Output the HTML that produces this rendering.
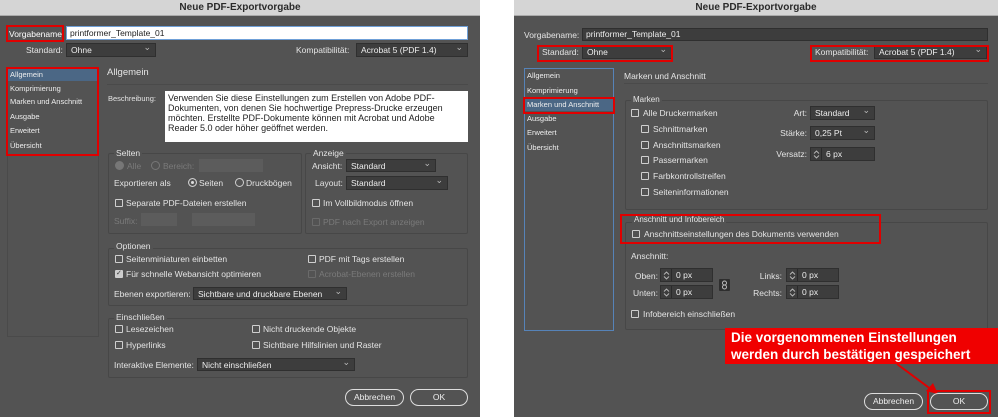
<!DOCTYPE html>
<html><head><meta charset="utf-8"><style>
*{margin:0;padding:0;box-sizing:border-box}
body{width:998px;height:417px;background:#fff;position:relative;overflow:hidden;font-family:"Liberation Sans",sans-serif;font-size:8.5px;color:#e4e4e4}
.d{position:absolute;top:0;height:417px;background:#535353;overflow:hidden}
.tb{position:absolute;left:0;right:0;top:0;height:16px;background:#d5d5d5;color:#2a2a2a;font-weight:bold;font-size:10px;text-align:center;line-height:16px;border-bottom:1px solid #aaa}
.a{position:absolute;white-space:nowrap;line-height:10px}
.s{position:absolute;background:#3d3d3d;border:1px solid #2f2f2f;color:#eee;padding-left:4px;line-height:12px;white-space:nowrap}
.s:after{content:"⌄";position:absolute;right:4px;top:-3px;font-size:9px;color:#bbb}
.n:after{content:""}
.g{position:absolute;border:1px solid #474747;border-radius:2px}
.cb{position:absolute;width:8px;height:8px;border:1px solid #cfcfcf;border-radius:1px}
.gr{color:#7a7a7a}
.gcb{border-color:#6a6a6a}
.rb{position:absolute;width:9px;height:9px;border:1px solid #cfcfcf;border-radius:50%}
.red{position:absolute;border:2px solid #e00000}
.btn{position:absolute;border:1.5px solid #ddd;border-radius:9px;text-align:center;line-height:14px;color:#eee}
.sp{position:absolute;background:#3d3d3d;border:1px solid #2f2f2f;color:#eee;line-height:12px;padding-left:15px}
.sp:before{content:"";position:absolute;left:10px;top:0;bottom:0;border-left:1px solid #2a2a2a}
.sp svg{position:absolute;left:2px;top:2px}
.side div{position:absolute;left:2px;font-size:7.5px;color:#eee}
</style></head><body>

<!-- LEFT DIALOG -->
<div class="d" style="left:0;width:480px">
<div class="tb">Neue PDF-Exportvorgabe</div>
<div class="a" style="left:9px;top:29px;color:#fff">Vorgabename:</div>
<div class="red" style="left:6px;top:25px;width:58px;height:17px"></div>
<div style="position:absolute;left:66px;top:26px;width:402px;height:14px;background:#fff;border:1px solid #6fa0d8;color:#222;padding-left:3px;line-height:12px">printformer_Template_01</div>
<div class="a" style="left:26px;top:45px">Standard:</div>
<div class="s" style="left:66px;top:43px;width:90px;height:14px">Ohne</div>
<div class="a" style="left:296px;top:45px">Kompatibilität:</div>
<div class="s" style="left:356px;top:43px;width:112px;height:14px">Acrobat 5 (PDF 1.4)</div>

<div style="position:absolute;left:7px;top:67px;width:92px;height:270px;border:1px solid #4a4a4a"></div>
<div style="position:absolute;left:8px;top:68px;width:90px;height:13px;background:#4b6785"></div>
<div class="side">
<div style="left:10px;top:70px">Allgemein</div>
<div style="left:10px;top:84px">Komprimierung</div>
<div style="left:10px;top:97px">Marken und Anschnitt</div>
<div style="left:10px;top:112px">Ausgabe</div>
<div style="left:10px;top:126px">Erweitert</div>
<div style="left:10px;top:141px">Übersicht</div>
</div>
<div class="red" style="left:6px;top:67px;width:93px;height:89px"></div>

<div class="a" style="left:107px;top:68px;font-size:9.5px">Allgemein</div>
<div style="position:absolute;left:107px;top:84px;width:361px;border-top:1px solid #4a4a4a"></div>
<div class="a" style="left:108px;top:94px;font-size:7.5px">Beschreibung:</div>
<div style="position:absolute;left:165px;top:91px;width:303px;height:51px;background:#fff;color:#222;padding:2px 10px 0 3px;line-height:10px;font-size:9px">Verwenden Sie diese Einstellungen zum Erstellen von Adobe PDF-Dokumenten, von denen Sie hochwertige Prepress-Drucke erzeugen möchten. Erstellte PDF-Dokumente können mit Acrobat und Adobe Reader 5.0 oder höher geöffnet werden.</div>

<div class="g" style="left:108px;top:153px;width:194px;height:81px"></div>
<div class="a" style="left:114px;top:148px;background:#535353;padding:0 2px">Selten</div>
<div class="rb" style="left:115px;top:161px;border-color:#777;background:#777"></div>
<div class="a gr" style="left:127px;top:161px">Alle</div>
<div class="rb" style="left:151px;top:161px;border-color:#777"></div>
<div class="a gr" style="left:163px;top:161px">Bereich:</div>
<div class="s n" style="left:199px;top:159px;width:64px;height:13px;background:#5c5c5c;border-color:#5c5c5c"></div>
<div class="a" style="left:114px;top:178px">Exportieren als</div>
<div class="rb" style="left:188px;top:178px;background:#ddd;box-shadow:inset 0 0 0 2px #535353"></div>
<div class="a" style="left:199px;top:178px">Seiten</div>
<div class="rb" style="left:235px;top:178px"></div>
<div class="a" style="left:246px;top:178px">Druckbögen</div>
<div class="cb" style="left:115px;top:199px"></div>
<div class="a" style="left:126px;top:198px">Separate PDF-Dateien erstellen</div>
<div class="a gr" style="left:114px;top:216px">Suffix:</div>
<div style="position:absolute;left:141px;top:213px;width:36px;height:13px;background:#5c5c5c"></div>
<div style="position:absolute;left:192px;top:213px;width:63px;height:13px;background:#5c5c5c"></div>

<div class="g" style="left:305px;top:153px;width:163px;height:81px"></div>
<div class="a" style="left:311px;top:148px;background:#535353;padding:0 2px">Anzeige</div>
<div class="a" style="left:312px;top:161px">Ansicht:</div>
<div class="s" style="left:346px;top:159px;width:90px;height:13px">Standard</div>
<div class="a" style="left:315px;top:178px">Layout:</div>
<div class="s" style="left:346px;top:176px;width:102px;height:14px">Standard</div>
<div class="cb" style="left:312px;top:199px"></div>
<div class="a" style="left:323px;top:198px">Im Vollbildmodus öffnen</div>
<div class="cb gcb" style="left:312px;top:218px"></div>
<div class="a gr" style="left:323px;top:217px">PDF nach Export anzeigen</div>

<div class="g" style="left:108px;top:248px;width:360px;height:58px"></div>
<div class="a" style="left:114px;top:241px;background:#535353;padding:0 2px">Optionen</div>
<div class="cb" style="left:115px;top:255px"></div>
<div class="a" style="left:126px;top:254px">Seitenminiaturen einbetten</div>
<div class="cb" style="left:308px;top:255px"></div>
<div class="a" style="left:319px;top:254px">PDF mit Tags erstellen</div>
<div class="cb" style="left:115px;top:270px;background:#ccc"></div>
<div class="a" style="left:116px;top:269px;color:#333;font-size:7px">✓</div>
<div class="a" style="left:126px;top:269px">Für schnelle Webansicht optimieren</div>
<div class="cb gcb" style="left:308px;top:270px"></div>
<div class="a gr" style="left:319px;top:269px">Acrobat-Ebenen erstellen</div>
<div class="a" style="left:114px;top:289px">Ebenen exportieren:</div>
<div class="s" style="left:193px;top:287px;width:154px;height:13px">Sichtbare und druckbare Ebenen</div>

<div class="g" style="left:108px;top:318px;width:360px;height:60px"></div>
<div class="a" style="left:114px;top:312px;background:#535353;padding:0 2px">Einschließen</div>
<div class="cb" style="left:115px;top:325px"></div>
<div class="a" style="left:126px;top:324px">Lesezeichen</div>
<div class="cb" style="left:252px;top:325px"></div>
<div class="a" style="left:263px;top:324px">Nicht druckende Objekte</div>
<div class="cb" style="left:115px;top:341px"></div>
<div class="a" style="left:126px;top:340px">Hyperlinks</div>
<div class="cb" style="left:252px;top:341px"></div>
<div class="a" style="left:263px;top:340px">Sichtbare Hilfslinien und Raster</div>
<div class="a" style="left:114px;top:360px">Interaktive Elemente:</div>
<div class="s" style="left:197px;top:358px;width:158px;height:13px">Nicht einschließen</div>

<div class="btn" style="left:345px;top:389px;width:59px;height:17px">Abbrechen</div>
<div class="btn" style="left:410px;top:389px;width:58px;height:17px">OK</div>
</div>

<!-- RIGHT DIALOG -->
<div class="d" style="left:514px;width:484px">
<div class="tb">Neue PDF-Exportvorgabe</div>
<div class="a" style="left:10px;top:30px">Vorgabename:</div>
<div style="position:absolute;left:68px;top:28px;width:406px;height:13px;background:#3d3d3d;border:1px solid #2f2f2f;padding-left:3px;line-height:11px;color:#eee">printformer_Template_01</div>
<div class="a" style="left:28px;top:47px">Standard:</div>
<div class="s" style="left:68px;top:45px;width:90px;height:14px">Ohne</div>
<div class="red" style="left:23px;top:45px;width:136px;height:17px"></div>
<div class="a" style="left:301px;top:47px">Kompatibilität:</div>
<div class="s" style="left:360px;top:45px;width:113px;height:14px">Acrobat 5 (PDF 1.4)</div>
<div class="red" style="left:296px;top:45px;width:179px;height:17px"></div>

<div style="position:absolute;left:10px;top:68px;width:90px;height:263px;border:1px solid #5683b8"></div>
<div style="position:absolute;left:11px;top:98px;width:88px;height:13px;background:#4b6785"></div>
<div class="side">
<div style="left:13px;top:71px">Allgemein</div>
<div style="left:13px;top:86px">Komprimierung</div>
<div style="left:13px;top:100px">Marken und Anschnitt</div>
<div style="left:13px;top:114px">Ausgabe</div>
<div style="left:13px;top:128px">Erweitert</div>
<div style="left:13px;top:143px">Übersicht</div>
</div>
<div class="red" style="left:9px;top:97px;width:92px;height:17px"></div>

<div class="a" style="left:110px;top:71px">Marken und Anschnitt</div>
<div style="position:absolute;left:110px;top:83px;width:364px;border-top:1px solid #4a4a4a"></div>

<div class="g" style="left:111px;top:100px;width:363px;height:110px"></div>
<div class="a" style="left:117px;top:95px;background:#535353;padding:0 2px;font-size:8px">Marken</div>
<div class="cb" style="left:117px;top:109px"></div>
<div class="a" style="left:129px;top:108px">Alle Druckermarken</div>
<div class="cb" style="left:127px;top:125px"></div><div class="a" style="left:139px;top:124px">Schnittmarken</div>
<div class="cb" style="left:127px;top:141px"></div><div class="a" style="left:139px;top:140px">Anschnittsmarken</div>
<div class="cb" style="left:127px;top:156px"></div><div class="a" style="left:139px;top:155px">Passermarken</div>
<div class="cb" style="left:127px;top:172px"></div><div class="a" style="left:139px;top:171px">Farbkontrollstreifen</div>
<div class="cb" style="left:127px;top:188px"></div><div class="a" style="left:139px;top:187px">Seiteninformationen</div>
<div class="a" style="left:263px;top:108px;width:30px;text-align:right">Art:</div>
<div class="s" style="left:296px;top:106px;width:65px;height:14px">Standard</div>
<div class="a" style="left:253px;top:128px;width:40px;text-align:right">Stärke:</div>
<div class="s" style="left:296px;top:126px;width:65px;height:14px">0,25 Pt</div>
<div class="a" style="left:253px;top:149px;width:40px;text-align:right">Versatz:</div>
<div class="sp" style="left:296px;top:147px;width:65px;height:14px">6 px<svg width="7" height="9"><path d="M1 3.5L3.5 1L6 3.5M1 5.5L3.5 8L6 5.5" fill="none" stroke="#bbb" stroke-width="0.9"/></svg></div>

<div class="g" style="left:111px;top:222px;width:363px;height:108px"></div>
<div class="a" style="left:118px;top:215px;background:#535353;padding:0 2px;font-size:8px">Anschnitt und Infobereich</div>
<div class="cb" style="left:118px;top:230px"></div>
<div class="a" style="left:130px;top:229px">Anschnittseinstellungen des Dokuments verwenden</div>
<div class="red" style="left:106px;top:214px;width:261px;height:30px"></div>
<div class="a" style="left:117px;top:251px">Anschnitt:</div>
<div class="a" style="left:110px;top:271px;width:34px;text-align:right">Oben:</div>
<div class="sp" style="left:146px;top:268px;width:53px;height:14px">0 px<svg width="7" height="9"><path d="M1 3.5L3.5 1L6 3.5M1 5.5L3.5 8L6 5.5" fill="none" stroke="#bbb" stroke-width="0.9"/></svg></div>
<div class="a" style="left:110px;top:288px;width:34px;text-align:right">Unten:</div>
<div class="sp" style="left:146px;top:285px;width:53px;height:14px">0 px<svg width="7" height="9"><path d="M1 3.5L3.5 1L6 3.5M1 5.5L3.5 8L6 5.5" fill="none" stroke="#bbb" stroke-width="0.9"/></svg></div>
<div style="position:absolute;left:205px;top:279px;width:11px;height:12px;background:#2e2e2e;border-radius:1px"><svg width="11" height="12"><rect x="3.5" y="2" width="4" height="4" rx="2" fill="none" stroke="#bbb"/><rect x="3.5" y="6" width="4" height="4" rx="2" fill="none" stroke="#bbb"/></svg></div>
<div class="a" style="left:230px;top:271px;width:38px;text-align:right">Links:</div>
<div class="sp" style="left:272px;top:268px;width:53px;height:14px">0 px<svg width="7" height="9"><path d="M1 3.5L3.5 1L6 3.5M1 5.5L3.5 8L6 5.5" fill="none" stroke="#bbb" stroke-width="0.9"/></svg></div>
<div class="a" style="left:230px;top:288px;width:38px;text-align:right">Rechts:</div>
<div class="sp" style="left:272px;top:285px;width:53px;height:14px">0 px<svg width="7" height="9"><path d="M1 3.5L3.5 1L6 3.5M1 5.5L3.5 8L6 5.5" fill="none" stroke="#bbb" stroke-width="0.9"/></svg></div>
<div class="cb" style="left:117px;top:310px"></div>
<div class="a" style="left:129px;top:309px">Infobereich einschließen</div>

<div style="position:absolute;left:211px;top:328px;width:273px;height:36px;background:#f00000;color:#fff;font-weight:bold;font-size:13.5px;line-height:17px;padding:1px 0 0 6px;white-space:nowrap">Die vorgenommenen Einstellungen<br>werden durch bestätigen gespeichert</div>
<svg style="position:absolute;left:380px;top:362px" width="50" height="34"><line x1="3" y1="2" x2="38" y2="28" stroke="#e00000" stroke-width="2"/><polygon points="44,32 32,29 39,21" fill="#e00000"/></svg>

<div class="btn" style="left:350px;top:393px;width:59px;height:17px">Abbrechen</div>
<div class="btn" style="left:416px;top:393px;width:58px;height:17px">OK</div>
<div class="red" style="left:413px;top:390px;width:64px;height:24px"></div>
</div>
</body></html>
